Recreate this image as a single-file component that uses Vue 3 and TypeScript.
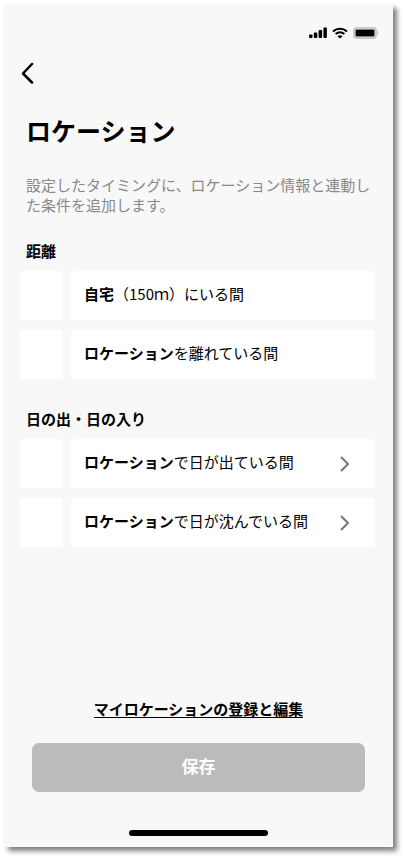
<script setup lang="ts">
import { ref } from 'vue'

interface Condition {
  id: string
  strong: string
  rest: string
  detail: boolean
}

interface Group {
  id: string
  title: string
  items: Condition[]
}

const groups: Group[] = [
  {
    id: 'distance',
    title: '距離',
    items: [
      { id: 'home', strong: '自宅', rest: '（150ｍ）にいる間', detail: false },
      { id: 'away', strong: 'ロケーション', rest: 'を離れている間', detail: false },
    ],
  },
  {
    id: 'sun',
    title: '日の出・日の入り',
    items: [
      { id: 'sunrise', strong: 'ロケーション', rest: 'で日が出ている間', detail: true },
      { id: 'sunset', strong: 'ロケーション', rest: 'で日が沈んでいる間', detail: true },
    ],
  },
]

const selected = ref<string[]>([])
</script>

<template>
  <main class="screen">
    <div class="status">
      <svg class="signal" viewBox="0 0 18 12" width="18" height="12">
        <rect x="0" y="7.500" width="3.500" height="3.500" rx="1" />
        <rect x="4.800" y="5.500" width="3.500" height="5.500" rx="1" />
        <rect x="9.600" y="3" width="3.500" height="8" rx="1" />
        <rect x="14.400" y="0.500" width="3.500" height="10.500" rx="1" />
      </svg>
      <svg class="wifi" viewBox="0 0 16 12" width="16" height="12">
        <path d="M1 4.400C5 .800 11 .800 15 4.400" />
        <path d="M3.600 7.100c2.600-2.200 6.200-2.200 8.800 0" />
        <path class="dot" d="M5.400 9.200c1.600-1.300 3.600-1.300 5.200 0L8 11.600z" />
      </svg>
      <svg class="battery" viewBox="0 0 26 12" width="26" height="12">
        <rect class="shell" x="1" y="1" width="22" height="10" rx="2.500" />
        <rect x="2.500" y="2.500" width="19" height="7" rx="1" />
        <path class="tip" d="M24.500 4v4q1-.600 1-2t-1-2z" />
      </svg>
    </div>

    <button class="back" type="button" aria-label="戻る">
      <svg viewBox="0 0 14 22" width="14" height="22">
        <path d="M12 2 3 11.500l9 9" />
      </svg>
    </button>

    <h1>ロケーション</h1>
    <p class="lead">設定したタイミングに、ロケーション情報と連動した条件を追加します。</p>

    <section v-for="group in groups" :key="group.id" class="group">
      <h2>{{ group.title }}</h2>
      <div v-for="item in group.items" :key="item.id" class="row">
        <input :id="item.id" v-model="selected" class="check" type="checkbox" :value="item.id" />
        <label class="card" :for="item.id">
          <span class="text"><b>{{ item.strong }}</b>{{ item.rest }}</span>
          <svg v-if="item.detail" class="chevron" viewBox="0 0 10 16" width="10" height="16">
            <path d="m1.500 1.500 6.500 6.500-6.500 6.500" />
          </svg>
        </label>
      </div>
    </section>

    <footer class="footer">
      <a class="manage" href="#locations">マイロケーションの登録と編集</a>
      <button class="save" type="button">保存</button>
      <div class="home-bar"></div>
    </footer>
  </main>
</template>

<style>
body {
  background: #fff;
}
</style>

<style scoped>
.screen {
  box-sizing: border-box;
  display: flex;
  flex-direction: column;
  min-height: calc(100vh - 17px);
  margin: 4px 13px 13px 4px;
  background: #f8f8f8;
  box-shadow: 4px 4px 5px rgba(0, 0, 0, 0.5);
  color: #000;
  font-family: "Noto Sans CJK JP", sans-serif;
  font-size: 15px;
  line-height: 20px;
}

.status {
  display: flex;
  justify-content: flex-end;
  align-items: center;
  gap: 5px;
  padding: 23px 14px 0 0;
}

.status svg {
  fill: #000;
}

.status .wifi path {
  fill: none;
  stroke: #000;
  stroke-width: 2;
}

.status .wifi .dot {
  fill: #000;
  stroke: none;
}

.status .battery .shell {
  fill: #fff;
  stroke: #bbb;
  stroke-width: 1.5;
}

.status .battery .tip {
  fill: #aaa;
}

.back {
  display: flex;
  align-self: flex-start;
  margin: 19px 0 0 12px;
  padding: 4px;
  border: 0;
  background: none;
}

.back svg {
  fill: none;
  stroke: #000;
  stroke-width: 2.5;
  stroke-linecap: round;
  stroke-linejoin: round;
}

h1 {
  margin: 24px 22px 0;
  font-size: 25px;
  font-weight: 700;
  line-height: 36px;
}

.lead {
  margin: 27px 22px 0;
  color: #888;
}

.group {
  display: flex;
  flex-direction: column;
  gap: 10px;
  padding: 26px 18px 0 16px;
}

.group + .group {
  padding-top: 30px;
}

h2 {
  margin: 0 6px;
  font-size: 15px;
  font-weight: 700;
  line-height: 20px;
}

.row {
  display: flex;
  gap: 8px;
}

.check {
  flex: none;
  width: 43px;
  height: 49px;
  margin: 0;
  border-radius: 4px;
  background: #fff;
  appearance: none;
}

.check:checked {
  background: #bbb;
}

.card {
  box-sizing: border-box;
  display: flex;
  flex: 1;
  justify-content: space-between;
  align-items: center;
  height: 49px;
  padding: 0 25px 0 13px;
  border-radius: 4px;
  background: #fff;
}

.text {
  padding-bottom: 4px;
}

.chevron {
  fill: none;
  stroke: #777;
  stroke-width: 2;
  stroke-linecap: round;
  stroke-linejoin: round;
}

.footer {
  display: flex;
  flex-direction: column;
  align-items: center;
  margin-top: auto;
  padding: 24px 28px 11px;
}

.manage {
  border-bottom: 1px solid #000;
  color: #000;
  font-weight: 700;
  line-height: 17px;
  text-decoration: none;
}

.save {
  align-self: stretch;
  height: 49px;
  margin-top: 25px;
  padding: 0 0 4px;
  border: 0;
  border-radius: 7px;
  background: #bbb;
  color: #fff;
  font: inherit;
  font-size: 17px;
  font-weight: 700;
}

.home-bar {
  width: 139px;
  height: 6px;
  margin-top: 38px;
  border-radius: 3px;
  background: #000;
}
</style>
